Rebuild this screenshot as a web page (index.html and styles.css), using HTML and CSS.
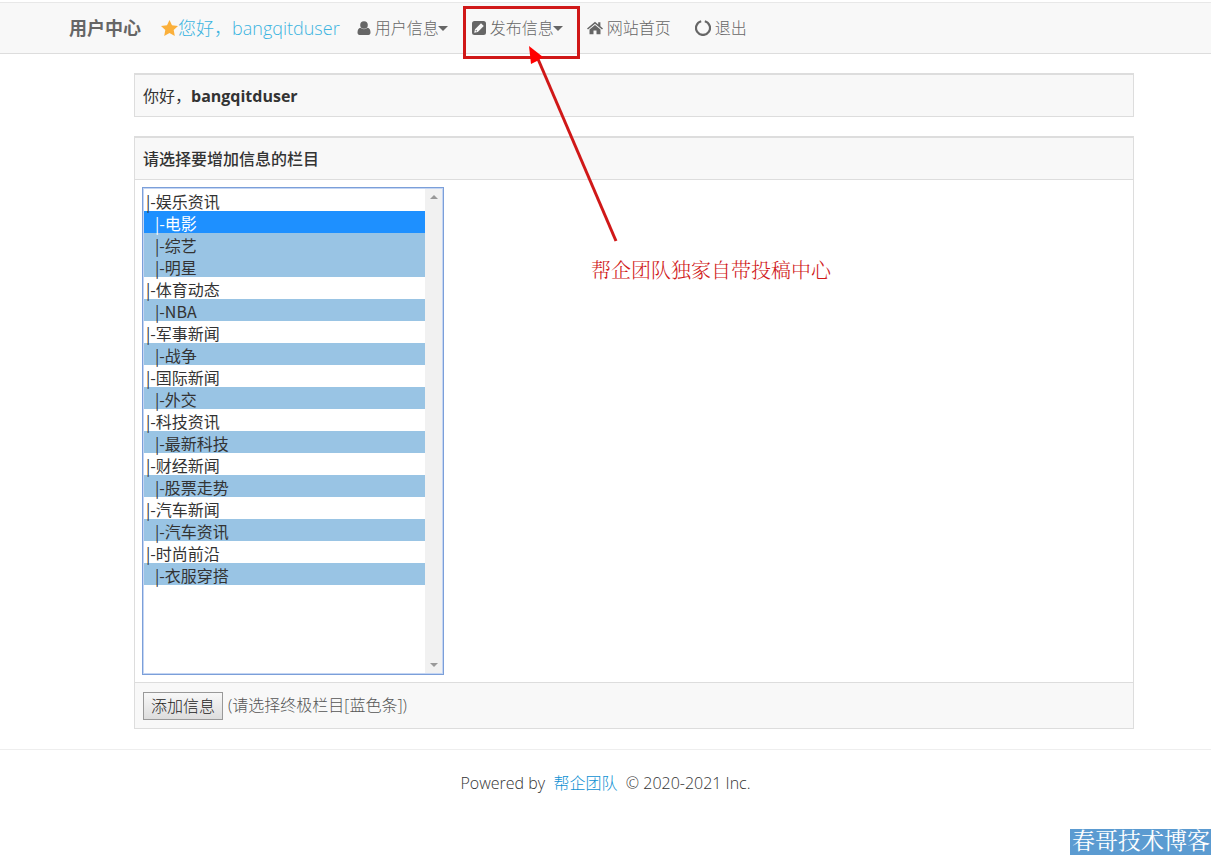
FILE: index.html
```html
<!DOCTYPE html>
<html lang="zh-CN">
<head>
<meta charset="utf-8">
<title>用户中心</title>
<link rel="stylesheet" href="styles.css">
</head>
<body>
<header class="topbar">
  <nav class="nav">
    <a class="brand" href="#">用户中心</a>
    <a class="nav-link hello" href="#"><svg class="star" viewBox="0 0 17 16" aria-hidden="true"><path d="M8.500 0l2.500 5.300 6 .8-4.300 4 1.100 5.900-5.300-2.900L3.200 16l1.100-5.900L0 6.100l6-.8z"/></svg>您好，bangqitduser</a>
    <a class="nav-link user" href="#"><svg class="icon" viewBox="0 0 14 14" aria-hidden="true"><circle cx="7" cy="4" r="3.800"/><path d="M3.500 6.700C1.500 7 .5 8.700.5 11.500c0 1.500.8 2.500 2 2.500h9c1.200 0 2-1 2-2.500 0-2.800-1-4.500-3-4.800-2 1.900-5 1.900-7 0z"/></svg><span>用户信息</span><i class="caret"></i></a>
    <a class="nav-link publish" href="#"><svg class="icon" viewBox="0 0 14 14" aria-hidden="true"><path fill-rule="evenodd" d="M2.500 0h9A2.500 2.500 0 0 1 14 2.500v9a2.500 2.500 0 0 1-2.500 2.500h-9A2.500 2.500 0 0 1 0 11.500v-9A2.500 2.500 0 0 1 2.500 0zM9 2.200 3 8.200 2.200 11.800l3.600-.8 6-6zM4 8.800l1.200 1.200-.9.500-.8-.8z"/></svg><span>发布信息</span><i class="caret"></i></a>
    <a class="nav-link home" href="#"><svg class="icon" viewBox="0 0 16 14" aria-hidden="true"><path d="M8 .8 0 7.500l1 1.100 7-5.900 7 5.900 1-1.100-2.600-2.200V1.200h-2.200v2.300z"/><path d="M8 4 2.500 8.600V13.200h4V9.500h3v3.700h4V8.600z"/></svg><span>网站首页</span></a>
    <a class="nav-link" href="#"><svg class="icon ring" viewBox="0 0 16 16" aria-hidden="true"><path fill="none" stroke="currentColor" stroke-width="2.200" d="M9.800 1.200a7 7 0 1 1-3.600 0"/></svg><span>退出</span></a>
  </nav>
</header>

<main class="main">
  <section class="panel greeting">你好，<strong>bangqitduser</strong></section>
  <form class="panel">
    <h1 class="panel-head"><label for="column">请选择要增加信息的栏目</label></h1>
    <div class="panel-body">
      <div class="listbox">
        <select class="list" id="column" size="22">
          <option>|-娱乐资讯</option>
          <option class="leaf" selected>|-电影</option>
          <option class="leaf">|-综艺</option>
          <option class="leaf">|-明星</option>
          <option>|-体育动态</option>
          <option class="leaf">|-NBA</option>
          <option>|-军事新闻</option>
          <option class="leaf">|-战争</option>
          <option>|-国际新闻</option>
          <option class="leaf">|-外交</option>
          <option>|-科技资讯</option>
          <option class="leaf">|-最新科技</option>
          <option>|-财经新闻</option>
          <option class="leaf">|-股票走势</option>
          <option>|-汽车新闻</option>
          <option class="leaf">|-汽车资讯</option>
          <option>|-时尚前沿</option>
          <option class="leaf">|-衣服穿搭</option>
        </select>
        <div class="track" aria-hidden="true">
          <svg viewBox="0 0 8 4"><path d="M0 4 4 0l4 4z"/></svg>
          <svg viewBox="0 0 8 4"><path d="M0 0l4 4 4-4z"/></svg>
        </div>
      </div>
    </div>
    <div class="panel-foot">
      <button class="add" type="button">添加信息</button>
      <span class="hint">(请选择终极栏目[蓝色条])</span>
    </div>
  </form>
</main>

<footer class="footer">Powered by&nbsp; <a href="#">帮企团队</a>&nbsp; © 2020-2021 Inc.</footer>

<div class="mark-box"></div>
<svg class="mark-arrow" viewBox="0 0 100 200" aria-hidden="true">
  <path class="shaft" d="M9 17 87 199"/>
  <path class="tip" d="M0 4 2 22 8 19 14 15z"/>
</svg>
<p class="mark-text">帮企团队独家自带投稿中心</p>
<div class="watermark">春哥技术博客</div>
</body>
</html>
```
FILE: styles.css
```css
* {
  box-sizing: border-box;
}

body {
  position: relative;
  min-height: 100vh;
  margin: 0;
  padding-top: 2px;
  background: #fff;
  color: #333;
  font: 16px/26px "Open Sans", "Noto Sans CJK SC", sans-serif;
}

a {
  color: #0e90d2;
  text-decoration: none;
}

.topbar {
  background: #f8f8f8;
  border-top: 1px solid #e8e8e8;
  border-bottom: 1px solid #ddd;
}

.nav {
  display: flex;
  align-items: center;
  height: 50px;
  padding-left: 69px;
  white-space: nowrap;
}

.nav a {
  color: #666;
}

.nav .brand {
  margin-right: 20px;
  font-size: 18px;
  font-weight: 700;
}

.nav-link {
  display: flex;
  align-items: center;
  gap: 4px;
  margin-right: 24px;
  font-weight: 300;
}

.nav .hello {
  gap: 0;
  margin-right: 17px;
  color: #3bb4e0;
  font-size: 18px;
}

.icon {
  width: 14px;
  height: 14px;
  fill: currentColor;
}

.home .icon {
  width: 16px;
}

.ring {
  width: 16px;
  height: 16px;
}

.star {
  width: 17px;
  height: 16px;
  fill: #fbb03b;
}

.caret {
  margin-left: -5px;
  border: 5px solid transparent;
  border-top-color: currentColor;
  border-bottom: 0;
}

.main {
  max-width: 1057px;
  margin: 0 auto;
  padding: 19px 0 20px 57px;
}

.panel {
  margin: 0 0 19px;
  border: 1px solid #ddd;
  border-top-width: 2px;
}

.panel:last-child {
  margin-bottom: 0;
}

.greeting {
  padding: 8px 8px 7px;
  background: #f8f8f8;
}

.panel-head {
  margin: 0;
  padding: 8px 8px 7px;
  background: #f8f8f8;
  border-bottom: 1px solid #ddd;
  font-size: 16px;
  font-weight: 500;
}

.panel-body {
  padding: 7px;
}

.listbox {
  display: flex;
  width: 302px;
  border: 1px solid #7b9fd9;
  outline: 1px solid #c4d5f3;
  outline-offset: -2px;
}

.list {
  flex: 1;
  height: 486px;
  margin: 0;
  padding: 1px 0 0 1px;
  border: 0;
  outline: 0;
  background: #fff;
  color: #333;
  font: 300 16px/22px "Noto Sans CJK SC", sans-serif;
  scrollbar-width: none;
}

.list option {
  height: 22px;
  min-height: 22px;
  padding: 0 2px;
  line-height: 22px;
}

.list .leaf {
  padding-left: 11px;
  background: #99c4e4;
}

.list option:checked {
  background: linear-gradient(#1e90ff, #1e90ff);
  color: #fff;
  -webkit-text-fill-color: #fff;
}

.track {
  display: flex;
  flex-direction: column;
  align-items: center;
  justify-content: space-between;
  width: 17px;
  margin: 1px 1px 1px 0;
  padding: 6px 0;
  background: #f1f1f1;
}

.track svg {
  width: 8px;
  height: 4px;
  fill: #999;
}

.panel-foot {
  display: flex;
  align-items: flex-start;
  gap: 5px;
  padding: 9px 8px 8px;
  background: #f8f8f8;
  border-top: 1px solid #ddd;
}

.add {
  height: 28px;
  padding: 0 7px;
  border: 1px solid #999;
  background: linear-gradient(#f8f8f8, #ddd);
  color: #222;
  font: inherit;
  font-weight: 300;
}

.hint {
  color: #555;
  font-weight: 300;
}

.footer {
  padding: 20px 0;
  border-top: 1px solid #eee;
  font-weight: 300;
  text-align: center;
}

.mark-box {
  position: absolute;
  top: 6px;
  left: 463px;
  width: 117px;
  height: 53px;
  border: 3px solid #d01818;
  pointer-events: none;
}

.mark-arrow {
  position: absolute;
  top: 42px;
  left: 529px;
  width: 100px;
  height: 200px;
  pointer-events: none;
}

.shaft {
  stroke: #d01818;
  stroke-width: 3;
}

.tip {
  fill: #f00;
}

.mark-text {
  position: absolute;
  top: 258px;
  left: 591px;
  margin: 0;
  color: #d01818;
  font-family: "Liberation Serif", "Noto Serif CJK SC", "Noto Sans CJK SC", serif;
  font-size: 20px;
  font-weight: 300;
}

.watermark {
  position: absolute;
  right: 0;
  bottom: 0;
  padding: 0 1px 0 2px;
  background: #5b9bd1;
  color: #fff;
  font-family: "Liberation Serif", "Noto Serif CJK SC", "Noto Sans CJK SC", serif;
  font-size: 23px;
}
```
